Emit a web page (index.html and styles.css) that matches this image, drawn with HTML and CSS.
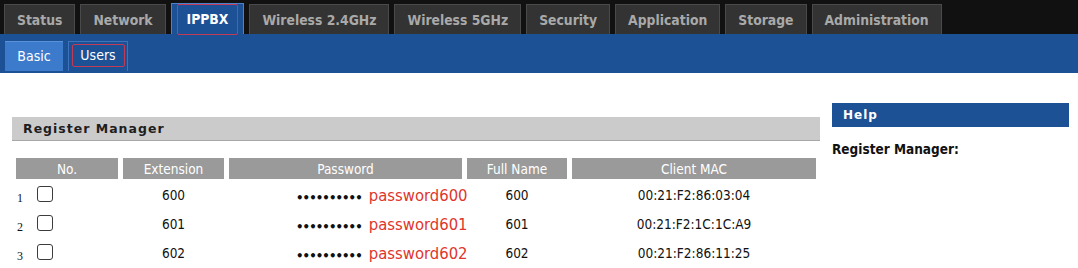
FILE: index.html
```html
<!DOCTYPE html>
<html lang="en">
<head>
    <meta charset="UTF-8">
    <meta name="viewport" content="width=device-width, initial-scale=1.0">
    <title>IPPBX - Users</title>
    <link rel="stylesheet" href="styles.css">
</head>
<body>
    <div class="topnav">
        <a class="tab">Status</a>
        <a class="tab">Network</a>
        <a class="tab active"><span class="mark">IPPBX</span></a>
        <a class="tab">Wireless 2.4GHz</a>
        <a class="tab">Wireless 5GHz</a>
        <a class="tab">Security</a>
        <a class="tab">Application</a>
        <a class="tab">Storage</a>
        <a class="tab">Administration</a>
    </div>
    <div class="subnav">
        <a class="subtab current">Basic</a>
        <a class="subtab picked"><span class="mark">Users</span></a>
    </div>

    <div class="main">
        <div class="content">
            <div class="section-title">Register Manager</div>
            <table class="users">
                <colgroup>
                    <col style="width: 102px">
                    <col style="width: 101px">
                    <col style="width: 233px">
                    <col style="width: 100px">
                    <col style="width: 244px">
                </colgroup>
                <thead>
                    <tr>
                        <th>No.</th>
                        <th>Extension</th>
                        <th>Password</th>
                        <th>Full Name</th>
                        <th>Client MAC</th>
                    </tr>
                </thead>
                <tbody></tbody>
            </table>
        </div>
        <div class="help">
            <div class="help-title">Help</div>
            <p class="help-item">Register Manager:</p>
        </div>
    </div>

    <script>
        const users = [
            { ext: "600", name: "600", mac: "00:21:F2:86:03:04" },
            { ext: "601", name: "601", mac: "00:21:F2:1C:1C:A9" },
            { ext: "602", name: "602", mac: "00:21:F2:86:11:25" }
        ];

        const tableBody = document.querySelector(".users tbody");
        users.forEach((user, i) => {
            const row = `<tr>
                <td class="no"><span class="num">${i + 1}</span><input type="checkbox"></td>
                <td>${user.ext}</td>
                <td class="pass"><span class="dots">••••••••••</span><span class="plain">password${user.ext}</span></td>
                <td>${user.name}</td>
                <td>${user.mac}</td>
            </tr>`;
            tableBody.innerHTML += row;
        });
    </script>
</body>
</html>
```

FILE: styles.css
```css
body {
    margin: 0;
    font-family: "DejaVu Sans", Verdana, sans-serif;
    font-stretch: condensed;
    font-size: 13.5px;
    color: #111;
    background-color: #fff;
}
.topnav {
    display: flex;
    gap: 5px;
    height: 34px;
    padding: 4px 4px 0;
    box-sizing: border-box;
    background-color: #111;
}
.tab {
    display: flex;
    align-items: center;
    padding: 0 12px;
    background-color: #333;
    border: 1px solid #4a4a4a;
    border-bottom: none;
    color: #a9a9a9;
    font-weight: bold;
    font-size: 13.8px;
}
.tab.active {
    margin-top: -1px;
    padding: 0 5px;
    background-color: #1c5196;
    border-color: #4b82c9;
    color: #fff;
}
.tab.active .mark {
    padding: 0 9px;
    height: 29px;
    line-height: 29px;
}
.mark {
    border: 1px solid #c23a55;
    border-radius: 2px;
}
.subnav {
    display: flex;
    gap: 5px;
    height: 39px;
    padding: 7px 5px 0;
    box-sizing: border-box;
    background-color: #1c5196;
}
.subtab {
    width: 58px;
    height: 30px;
    box-sizing: border-box;
    display: flex;
    justify-content: center;
    color: #fff;
    font-size: 14px;
}
.subtab.current {
    align-items: flex-end;
    padding-bottom: 7px;
    background-color: #3c7bcb;
    border-top: 1px solid #5a92d8;
}
.subtab.picked {
    width: 60px;
    padding-top: 2px;
    border: 1px solid #3d74bd;
    border-bottom: none;
}
.subtab.picked .mark {
    width: 53px;
    height: 23px;
    line-height: 21px;
    text-align: center;
    box-sizing: border-box;
}
.main {
    display: flex;
    gap: 12px;
    padding: 0 9px 0 12px;
}
.content {
    width: 808px;
    padding-top: 44px;
}
.section-title {
    height: 23px;
    line-height: 23px;
    padding-left: 11px;
    background-color: #cbcbcb;
    border-bottom: 1px solid #a8a8a8;
    font-weight: bold;
    font-size: 12.5px;
    font-stretch: normal;
    letter-spacing: 1px;
    color: #1e1e1e;
}
.users {
    width: 810px;
    margin: 17px 0 0 -1px;
    border-collapse: separate;
    border-spacing: 5px 0;
    table-layout: fixed;
}
.users th {
    height: 21px;
    padding: 0;
    background-color: #9a9a9a;
    color: #fff;
    font-weight: normal;
}
.users td {
    height: 29px;
    padding: 3px 0 0;
    box-sizing: border-box;
    text-align: center;
}
.users td.no {
    text-align: left;
    padding-left: 1px;
}
.num {
    font-family: "Liberation Serif", serif;
    font-size: 12px;
    vertical-align: -4px;
}
.users input {
    appearance: none;
    width: 16px;
    height: 16px;
    margin: 0 0 0 14px;
    border: 1px solid #3c3c3c;
    border-radius: 3px;
    background-color: #fff;
    vertical-align: -4px;
}
.users td.pass {
    text-align: left;
    padding-left: 67px;
}
.dots {
    font-size: 13px;
    font-weight: bold;
    letter-spacing: -0.9px;
}
.plain {
    margin-left: 7px;
    font-size: 16.5px;
    color: #e0352c;
    vertical-align: 1px;
}
.help {
    width: 237px;
    padding-top: 30px;
}
.help-title {
    height: 24px;
    line-height: 24px;
    padding-left: 11px;
    background-color: #1c5196;
    color: #fff;
    font-weight: bold;
    font-size: 12px;
    font-stretch: normal;
    letter-spacing: 1px;
}
.help-item {
    margin: 14px 0 0;
    font-weight: bold;
    line-height: 16px;
}
```
